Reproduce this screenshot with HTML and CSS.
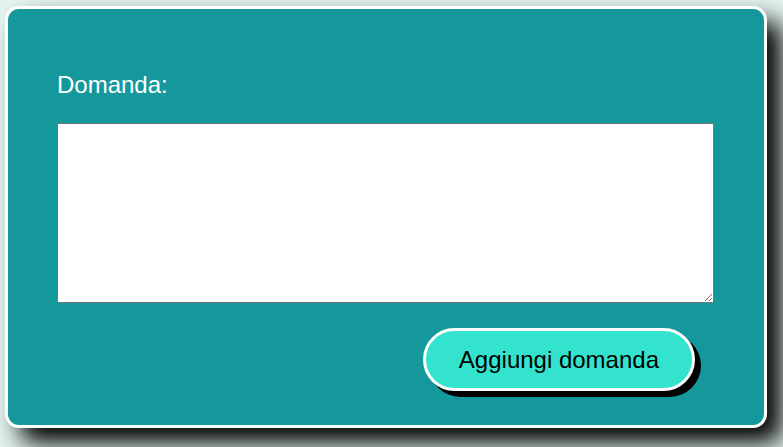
FILE: index.html
```html
<!DOCTYPE html>
<html lang="it">
<head>
<meta charset="utf-8">
<title>Domanda</title>
<link rel="stylesheet" href="styles.css">
</head>
<body>
<form class="card">
  <label class="label" for="domanda">Domanda:</label>
  <textarea id="domanda" class="field"></textarea>
  <div class="actions">
    <button type="button" class="btn">Aggiungi domanda</button>
  </div>
</form>
</body>
</html>
```
FILE: styles.css
```css
html, body {
  margin: 0;
  height: 100%;
}
body {
  background: #e2f3f0;
  padding: 6px 0 0 5px;
  box-sizing: border-box;
  font-family: "Liberation Sans", Arial, sans-serif;
  overflow: hidden;
}
.card {
  box-sizing: border-box;
  width: 762px;
  height: 422px;
  background: #15989b;
  border: 3px solid #ffffff;
  border-radius: 14px;
  box-shadow: 15px 15px 24px #000000;
  padding: 62px 50px 0 49px;
  display: flex;
  flex-direction: column;
}
.label {
  color: #ffffff;
  font-size: 24px;
  line-height: 28px;
  margin-bottom: 24px;
}
.field {
  box-sizing: border-box;
  width: 657px;
  height: 180px;
  margin: 0;
  background: #ffffff;
  border: 1px solid #767676;
}
.actions {
  display: flex;
  justify-content: flex-end;
  margin-top: 25px;
  padding-right: 19px;
}
.btn {
  font-family: "Liberation Sans", Arial, sans-serif;
  font-size: 24px;
  line-height: 27px;
  color: #000000;
  background: #33e3cd;
  border: 3px solid #ffffff;
  border-radius: 32px;
  padding: 15px 33px;
  box-shadow: 6px 6px 0 #000000;
  cursor: pointer;
}
```
